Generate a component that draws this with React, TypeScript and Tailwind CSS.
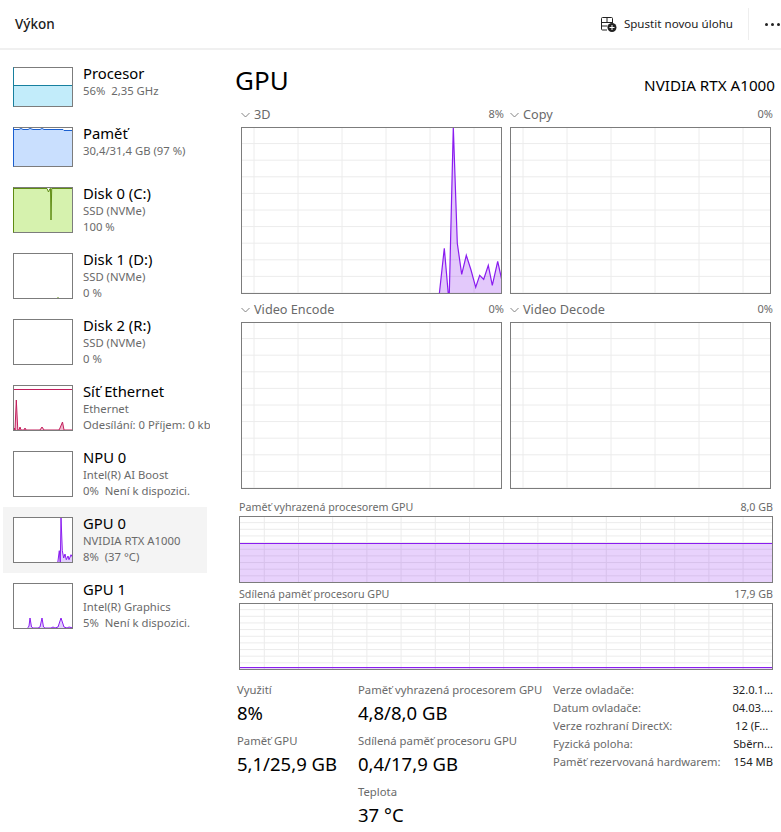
import React from "react";

type P = [number, number];
const pts = (a: P[]) => a.map((p) => p.join(",")).join(" ");
const FONT = "font-['Noto_Sans',sans-serif]";

type Item = {
  t: string;
  l: string[];
  h: number;
  fill?: string;
  stroke?: string;
  line?: P[];
  max?: number;
  edge?: boolean;
  sel?: boolean;
};

const items: Item[] = [
  { t: "Procesor", l: ["56%  2,35 GHz"], h: 40, fill: "#c2ecfa", stroke: "#17809f", edge: true,
    line: [[1, 18.5], [60, 18.5]] },
  { t: "Paměť", l: ["30,4/31,4 GB (97 %)"], h: 40, fill: "#c9dffe", stroke: "#1a5fd0", edge: true,
    line: [[1, 2.5], [6, 2.5], [8, 1.5], [10, 2.5], [15, 2.5], [17, 1.5], [20, 2.5], [27, 2.5], [29, 1.5], [31, 2.5], [50, 2.5], [51, 3.5], [60, 3.5]] },
  { t: "Disk 0 (C:)", l: ["SSD (NVMe)", "100 %"], h: 46, fill: "#d6f2ae", stroke: "#5f8c12", edge: true,
    line: [[1, 1.5], [34, 1.5], [35.5, 5], [37, 1.5], [37.5, 1.5], [38, 33], [38.7, 1.5], [60, 1.5]] },
  { t: "Disk 1 (D:)", l: ["SSD (NVMe)", "0 %"], h: 46, stroke: "#5f8c12", fill: "none",
    line: [[44.5, 44.5], [45.5, 44.5]] },
  { t: "Disk 2 (R:)", l: ["SSD (NVMe)", "0 %"], h: 46 },
  { t: "Síť Ethernet", l: ["Ethernet", "Odesílání: 0 Příjem: 0 kbps"], h: 46, fill: "#f0b6cc", stroke: "#c21f5c", max: 4.5,
    line: [[1, 46], [1.5, 43], [2, 45], [3.3, 15], [4.8, 45], [6, 45], [7, 42], [8, 45], [11, 45], [12, 43], [13, 45], [27, 45], [29, 42], [31, 45], [46, 45], [47, 43], [49.5, 37], [51, 45], [60, 45]] },
  { t: "NPU 0", l: ["Intel(R) AI Boost", "0%  Není k dispozici."], h: 46 },
  { t: "GPU 0", l: ["NVIDIA RTX A1000", "8%  (37 °C)"], h: 46, sel: true, fill: "#e2d0fc", stroke: "#8a1cf0",
    line: [[44.7, 46], [46.3, 33.7], [47.3, 46], [48, 0], [49.3, 33.7], [50.7, 41], [52, 37], [53.3, 42.7], [55, 39], [56, 42.7], [58, 37.7], [60, 41]] },
  { t: "GPU 1", l: ["Intel(R) Graphics", "5%  Není k dispozici."], h: 46, fill: "#e2d0fc", stroke: "#8a1cf0",
    line: [[14, 46], [15, 44.5], [16, 43], [17, 35], [18.5, 44], [20, 45], [25, 45], [27, 44], [29, 35], [30.5, 44], [32, 45], [38, 45], [40, 44], [42, 45], [45, 44], [48, 35], [51, 44], [54, 45], [56, 44], [60, 45]] },
];

function Thumb({ h, fill, stroke, line, max, edge }: Item) {
  return (
    <div
      className="w-[60px] shrink-0 border border-[#7c7c7c] bg-white"
      style={{ height: h, borderLeftColor: edge ? stroke : undefined }}
    >
      <svg className="block w-full h-full" viewBox={`1 1 58 ${h - 2}`} preserveAspectRatio="none">
        {line && fill && fill !== "none" && (
          <polygon points={pts([...line, [60, h], [0, h]])} fill={fill} />
        )}
        {line && <polyline points={pts(line)} fill="none" stroke={stroke} strokeWidth="1" />}
        {max !== undefined && <line x1={0} x2={60} y1={max} y2={max} stroke={stroke} strokeWidth="1" />}
      </svg>
    </div>
  );
}

function SideRow({ item }: { item: Item }) {
  return (
    <div className={`ml-[3px] w-[204px] flex gap-[10px] pl-[10px] pt-[10px] ${item.h === 46 ? "h-[66px]" : "h-[60px]"} ${item.sel ? "bg-[#f4f4f4]" : ""}`}>
      <Thumb {...item} />
      <div className="whitespace-pre -mt-[4px]">
        <div className="text-[14.8px] leading-[20px] text-black">{item.t}</div>
        {item.l.map((s) => (
          <div key={s} className="text-[11.3px] leading-[16px] text-[#6a6a6a]">{s}</div>
        ))}
      </div>
    </div>
  );
}

const line3d: P[] = [[198.3, 167], [203.3, 121.3], [207.3, 167], [208.3, 167], [212.3, 0], [216.3, 116.3], [220.7, 147.3], [225.3, 128.3], [230, 143], [234.7, 160.3], [238.7, 148.3], [242.7, 152.3], [247.3, 138.3], [251.3, 158.3], [256.7, 134.3], [261, 154]];

function Grid({ w, h, x0, dx, dy }: { w: number; h: number; x0: number; dx: number; dy: number }) {
  const xs: number[] = [];
  for (let x = x0; x < w; x += dx) xs.push(x);
  const ys: number[] = [];
  for (let y = dy; y < h - 1; y += dy) ys.push(y);
  return (
    <g stroke="#ececec" strokeWidth="1">
      {xs.map((x) => <line key={x} x1={x} x2={x} y1={0} y2={h} />)}
      {ys.map((y) => <line key={y} x1={0} x2={w} y1={y} y2={y} />)}
    </g>
  );
}

function BigChart({ data }: { data?: P[] }) {
  return (
    <div className="w-[261px] h-[167px] border border-[#7c7c7c] bg-white">
      <svg className="block w-full h-full" viewBox="1 1 259 165">
        <Grid w={261} h={167} x0={13} dx={44} dy={16.6} />
        {data && (
          <>
            <polygon points={pts([...data, [261, 167]])} fill="#8a1cf0" fillOpacity="0.24" />
            <polyline points={pts(data)} fill="none" stroke="#8a1cf0" strokeWidth="1.2" />
          </>
        )}
      </svg>
    </div>
  );
}

function ChartBlock({ name, value, data }: { name: string; value: string; data?: P[] }) {
  return (
    <div>
      <div className="h-[21px] pb-[4px] -mr-[2px] flex items-center justify-between text-[#6a6a6a]">
        <div className="flex items-center">
          <svg width="9" height="6" viewBox="0 0 9 6" className="mr-[4px]" fill="none" stroke="#777" strokeWidth="0.9">
            <path d="M0.5 1 L4.5 5 L8.5 1" />
          </svg>
          <span className="text-[12.7px]">{name}</span>
        </div>
        <span className="text-[11px]">{value}</span>
      </div>
      <BigChart data={data} />
    </div>
  );
}

function MemChart({ h, level }: { h: number; level: number }) {
  return (
    <div className="w-[534px] border border-[#7c7c7c] bg-white" style={{ height: h }}>
      <svg className="block w-full h-full" viewBox={`1 1 532 ${h - 2}`}>
        <Grid w={534} h={h} x0={25.3} dx={34.2} dy={6.65} />
        <rect x={0} y={level} width={534} height={h - level} fill="#8a1cf0" fillOpacity="0.2" />
        <line x1={0} x2={534} y1={level + 0.5} y2={level + 0.5} stroke="#8a1cf0" strokeWidth="1" />
      </svg>
    </div>
  );
}

function Stat({ label, value, className }: { label: string; value: string; className?: string }) {
  return (
    <div className={`whitespace-nowrap ${className ?? ""}`}>
      <div className="text-[11.3px] leading-[16px] text-[#6a6a6a]">{label}</div>
      <div className="text-[18.5px] leading-[26px] mt-[2px] text-black">{value}</div>
    </div>
  );
}

const rows: [string, string][] = [
  ["Verze ovladače:", "32.0.1..."],
  ["Datum ovladače:", "04.03...."],
  ["Verze rozhraní DirectX:", "12 (F..."],
  ["Fyzická poloha:", "Sběrn..."],
  ["Paměť rezervovaná hardwarem:", "154 MB"],
];

export default function App() {
  return (
    <div className={`w-[781px] h-[832px] overflow-hidden bg-white flex flex-col ${FONT}`}>
      <header className="h-[50px] shrink-0 border-b-2 border-[#f0f0f0] flex items-center pl-[15px]">
        <span className="text-[13.5px] font-medium text-[#1a1a1a]">Výkon</span>
        <div className="ml-auto flex items-center">
          <svg width="17" height="16" viewBox="0 0 17 16" fill="none" className="mr-[7px]">
            <path d="M1.5 9V2.5a1 1 0 0 1 1-1h9a1 1 0 0 1 1 1V7M1.5 6.5h11M7 1.5v5M1.5 9v4a1 1 0 0 0 1 1H7M1.5 10h6" stroke="#222" strokeWidth="1" />
            <circle cx="12" cy="11.5" r="4.5" fill="#222" />
            <path d="M12 9v5M9.5 11.5h5" stroke="#fff" strokeWidth="1" />
          </svg>
          <span className="text-[11.6px] text-[#222]">Spustit novou úlohu</span>
          <div className="ml-[15px] w-px h-[32px] bg-[#eeeeee]" />
          <div className="ml-[16px] flex gap-[3px] w-[16px]">
            <span className="size-[3px] shrink-0 rounded-full bg-[#222]" />
            <span className="size-[3px] shrink-0 rounded-full bg-[#222]" />
            <span className="size-[3px] shrink-0 rounded-full bg-[#222]" />
          </div>
        </div>
      </header>

      <div className="flex flex-1 min-h-0">
        <aside className="w-[210px] shrink-0 overflow-hidden pt-[7px]">
          {items.map((it) => <SideRow key={it.t} item={it} />)}
        </aside>

        <main className="flex-1 min-w-0 pl-[29px] pr-[8px]">
          <div className="h-[56px] -ml-[4px] -mr-[2px] flex items-center justify-between">
            <span className="text-[26px] text-black leading-none mt-[4px]">GPU</span>
            <span className="text-[15.2px] text-black mt-[14px]">NVIDIA RTX A1000</span>
          </div>
          <div className="ml-[2px] grid grid-cols-[261px_261px] gap-x-[8px] gap-y-[7px]">
            <ChartBlock name="3D" value="8%" data={line3d} />
            <ChartBlock name="Copy" value="0%" />
            <ChartBlock name="Video Encode" value="0%" />
            <ChartBlock name="Video Decode" value="0%" />
          </div>
          <div className="mt-[10px] h-[17px] flex items-center justify-between text-[10.7px] text-[#6a6a6a]">
            <span>Paměť vyhrazená procesorem GPU</span>
            <span>8,0 GB</span>
          </div>
          <MemChart h={67} level={27} />
          <div className="mt-[3px] h-[17px] flex items-center justify-between text-[10.7px] text-[#6a6a6a]">
            <span>Sdílená paměť procesoru GPU</span>
            <span>17,9 GB</span>
          </div>
          <MemChart h={67} level={64} />

          <div className="mt-[12px] -ml-[2px] flex">
            <div className="w-[121px] flex flex-col gap-[7px]">
              <Stat label="Využití" value="8%" />
              <Stat label="Paměť GPU" value="5,1/25,9 GB" />
            </div>
            <div className="w-[195px] flex flex-col gap-[7px]">
              <Stat label="Paměť vyhrazená procesorem GPU" value="4,8/8,0 GB" />
              <Stat label="Sdílená paměť procesoru GPU" value="0,4/17,9 GB" />
              <Stat label="Teplota" value="37 °C" />
            </div>
            <div className="w-[220px] text-[11.2px] leading-[18px] -mt-[1px]">
              {rows.map(([a, b]) => (
                <div key={a} className="flex whitespace-nowrap">
                  <span className="w-[182px] text-[#6a6a6a]">{a}</span>
                  <span className="text-[#222]">{b}</span>
                </div>
              ))}
            </div>
          </div>
        </main>
      </div>
    </div>
  );
}
